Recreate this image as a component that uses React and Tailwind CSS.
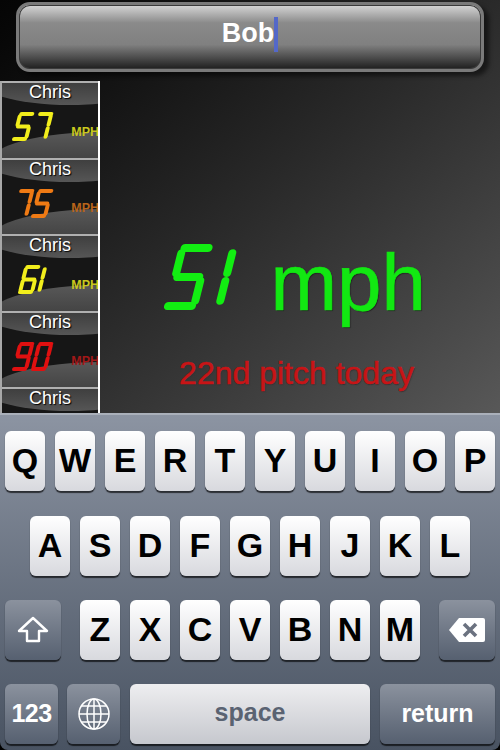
import { Fragment } from "react";

const SEGMENTS = {
  a: [0.08, 0, 1, 0],
  b: [1, 0.09, 1, 0.43],
  c: [1, 0.57, 1, 0.91],
  d: [0, 1, 0.92, 1],
  e: [0, 0.57, 0, 0.91],
  f: [0, 0.09, 0, 0.43],
  g: [0.08, 0.5, 0.92, 0.5],
};

const DIGITS = {
  0: "abcdef",
  1: "bc",
  2: "abged",
  3: "abgcd",
  4: "fgbc",
  5: "afgcd",
  6: "afgedc",
  7: "abc",
  8: "abcdefg",
  9: "abcfgd",
};

// led readout, drawn as separate strokes like the real display
function SevenSeg({ value, height, digitWidth, gap, stroke, color }) {
  const slant = height * 0.25;
  const chars = String(value).split("");
  let x = stroke / 2 + slant;
  const parts = chars.map((c) => {
    const narrow = c === "1";
    const w = narrow ? 0 : digitWidth;
    const left = x;
    x += w + gap;
    return { c, left, w };
  });
  const total = x - gap + stroke / 2;
  const h = height - stroke;
  return (
    <svg
      width={total}
      height={height}
      viewBox={`0 0 ${total} ${height}`}
      role="img"
      aria-label={String(value)}
      className="block"
    >
      <g
        stroke={color}
        strokeWidth={stroke}
        strokeLinecap="round"
        transform={`translate(0 ${stroke / 2}) skewX(-14)`}
      >
        {parts.map((p, i) => (
          <Fragment key={i}>
            {DIGITS[p.c].split("").map((s) => {
              const [x1, y1, x2, y2] = SEGMENTS[s];
              return (
                <line
                  key={s}
                  x1={p.left + x1 * p.w}
                  y1={y1 * h}
                  x2={p.left + x2 * p.w}
                  y2={y2 * h}
                />
              );
            })}
          </Fragment>
        ))}
      </g>
    </svg>
  );
}

const history = [
  { speed: 57, color: "#f2ee1c", unit: "text-[#c9c81e]" },
  { speed: 75, color: "#ef7a14", unit: "text-[#b8641a]" },
  { speed: 61, color: "#f2ee1c", unit: "text-[#c9c81e]" },
  { speed: 90, color: "#e01010", unit: "text-[#a01818]" },
];

function PitchRow({ speed, color, unit, last }) {
  return (
    <div
      className={`relative overflow-hidden shrink-0 bg-[#161616] border-t-2 border-[#b0b0b0] ${
        last ? "h-[27px]" : "h-[76.5px]"
      }`}
    >
      <div className="absolute left-[-28px] top-[-34px] w-[190px] h-[56px] rounded-[50%] bg-gradient-to-b from-[#1e1e1e] to-[#565656]" />
      {!last && (
        <div className="absolute left-[-12px] top-[49px] w-[225px] h-[60px] rounded-[50%] bg-gradient-to-b from-[#585858] to-[#2c2c2c]" />
      )}
      <div className="relative -mt-[1px] text-center text-white text-[18px] leading-[20px] [text-shadow:1px_1px_1px_#000]">
        Chris
      </div>
      {!last && (
        <div className="relative flex items-end justify-between pl-[9px] mt-[10px]">
          <div className="w-[43px] flex justify-center">
            <SevenSeg value={speed} height={29} digitWidth={12} gap={7} stroke={4} color={color} />
          </div>
          <span className={`text-[12.5px] font-bold leading-none mb-[3px] -mr-[1px] ${unit}`}>MPH</span>
        </div>
      )}
    </div>
  );
}

function Key({ children, className = "" }) {
  return (
    <div
      className={`flex items-center justify-center h-[60px] pb-[2px] rounded-[6px] bg-gradient-to-b from-white to-[#d8d9de] text-black font-bold shadow-[0_1.5px_1px_rgba(0,0,0,0.65)] ${className}`}
    >
      {children}
    </div>
  );
}

function DarkKey({ children, className = "" }) {
  return (
    <div
      className={`flex items-center justify-center h-[60px] rounded-[6px] bg-gradient-to-b from-[#8b929e] to-[#566070] text-white font-bold shadow-[0_1.5px_1px_rgba(0,0,0,0.65)] ${className}`}
    >
      {children}
    </div>
  );
}

function KeyRow({ letters }) {
  return (
    <div className="flex justify-center gap-[10px]">
      {letters.split("").map((l) => (
        <Key key={l} className="w-10 text-[34px]">
          {l}
        </Key>
      ))}
    </div>
  );
}

export default function App() {
  return (
    <div className="w-[500px] h-[750px] overflow-hidden bg-black font-['Liberation_Sans',Arial,sans-serif]">
      <div className="h-[413px] flex flex-col bg-gradient-to-br from-[#050505] via-[#2a2a2a] to-[#585858]">
        <div className="h-[81px] shrink-0 px-4 pt-[2px]">
          <div className="h-[70px] pb-[5px] rounded-[14px] border-[3px] border-[#7a7a7a] bg-[linear-gradient(to_bottom,#d6d6d6_0%,#8a8a8a_28%,#808080_62%,#1e1e1e_100%)] shadow-[5px_4px_4px_rgba(0,0,0,0.5),inset_0_0_0_1px_#3a3a3a] flex items-center justify-center">
            <span className="text-white font-bold text-[27px] leading-none mb-[2px]">Bob</span>
            <span className="w-[4px] h-[35px] bg-[#5468c8]" />
          </div>
        </div>
        <div className="flex flex-1 min-h-0">
          <div className="w-[100px] shrink-0 flex flex-col overflow-hidden border-x-2 border-l-[#a8a8a8] border-r-white">
            {history.map((p) => (
              <PitchRow key={p.color + p.speed} {...p} />
            ))}
            <PitchRow last />
          </div>
          <div className="flex-1 flex flex-col items-center pt-[162px]">
            <div className="flex items-baseline gap-[33px] mr-[12px]">
              <SevenSeg value={51} height={66} digitWidth={26} gap={25} stroke={8} color="#12ee12" />
              <span className="text-[#12e812] text-[80px] leading-none [-webkit-text-stroke:0.7px_#12e812] [text-shadow:1px_1px_1px_#222]">
                mph
              </span>
            </div>
            <div className="text-[#c81416] text-[32px] leading-none mt-[34px] mr-[7px] [-webkit-text-stroke:0.5px_#c81416] [text-shadow:1px_1px_1px_#333]">
              22nd pitch today
            </div>
          </div>
        </div>
      </div>

      <div className="h-[337px] rounded-b-[8px] border-t-2 border-[#aab0ba] bg-gradient-to-b from-[#8c94a2] to-[#495362] pt-4 px-[5px] flex flex-col">
        <div className="mb-[25px]">
          <KeyRow letters="QWERTYUIOP" />
        </div>
        <div className="flex flex-col gap-6">
          <KeyRow letters="ASDFGHJKL" />
          <div className="flex justify-between">
            <DarkKey className="w-14">
              <svg width="32" height="28" viewBox="0 0 32 28" fill="none" stroke="#fff" strokeWidth="2.4" strokeLinejoin="round">
                <path d="M16 2 L30 15 L22 15 L22 25 L10 25 L10 15 L2 15 Z" />
              </svg>
            </DarkKey>
            <div className="flex gap-[10px]">
              {"ZXCVBNM".split("").map((l) => (
                <Key key={l} className="w-10 text-[34px]">
                  {l}
                </Key>
              ))}
            </div>
            <DarkKey className="w-14">
              <svg width="38" height="26" viewBox="0 0 38 26">
                <path d="M11 1 H35 Q37 1 37 3 V23 Q37 25 35 25 H11 L1 13 Z" fill="#fff" />
                <path d="M16 7 L28 19 M28 7 L16 19" stroke="#6b7280" strokeWidth="3.6" />
              </svg>
            </DarkKey>
          </div>
          <div className="flex gap-[10px]">
            <div className="flex gap-[9px]">
              <DarkKey className="w-[53px] text-[25px] tracking-[-0.5px]">123</DarkKey>
              <DarkKey className="w-[53px]">
                <svg width="34" height="34" viewBox="0 0 34 34" fill="none" stroke="#fff" strokeWidth="1.5">
                  <circle cx="17" cy="17" r="15" />
                  <ellipse cx="17" cy="17" rx="7" ry="15" />
                  <path d="M17 2 V32 M2 17 H32 M4.5 9 H29.5 M4.5 25 H29.5" />
                </svg>
              </DarkKey>
            </div>
            <Key className="w-[240px] text-[25px] !text-[#5a6372] !from-[#eeeef0] !to-[#c6c8ce]">space</Key>
            <DarkKey className="w-[115px] text-[25px]">return</DarkKey>
          </div>
        </div>
      </div>
    </div>
  );
}
